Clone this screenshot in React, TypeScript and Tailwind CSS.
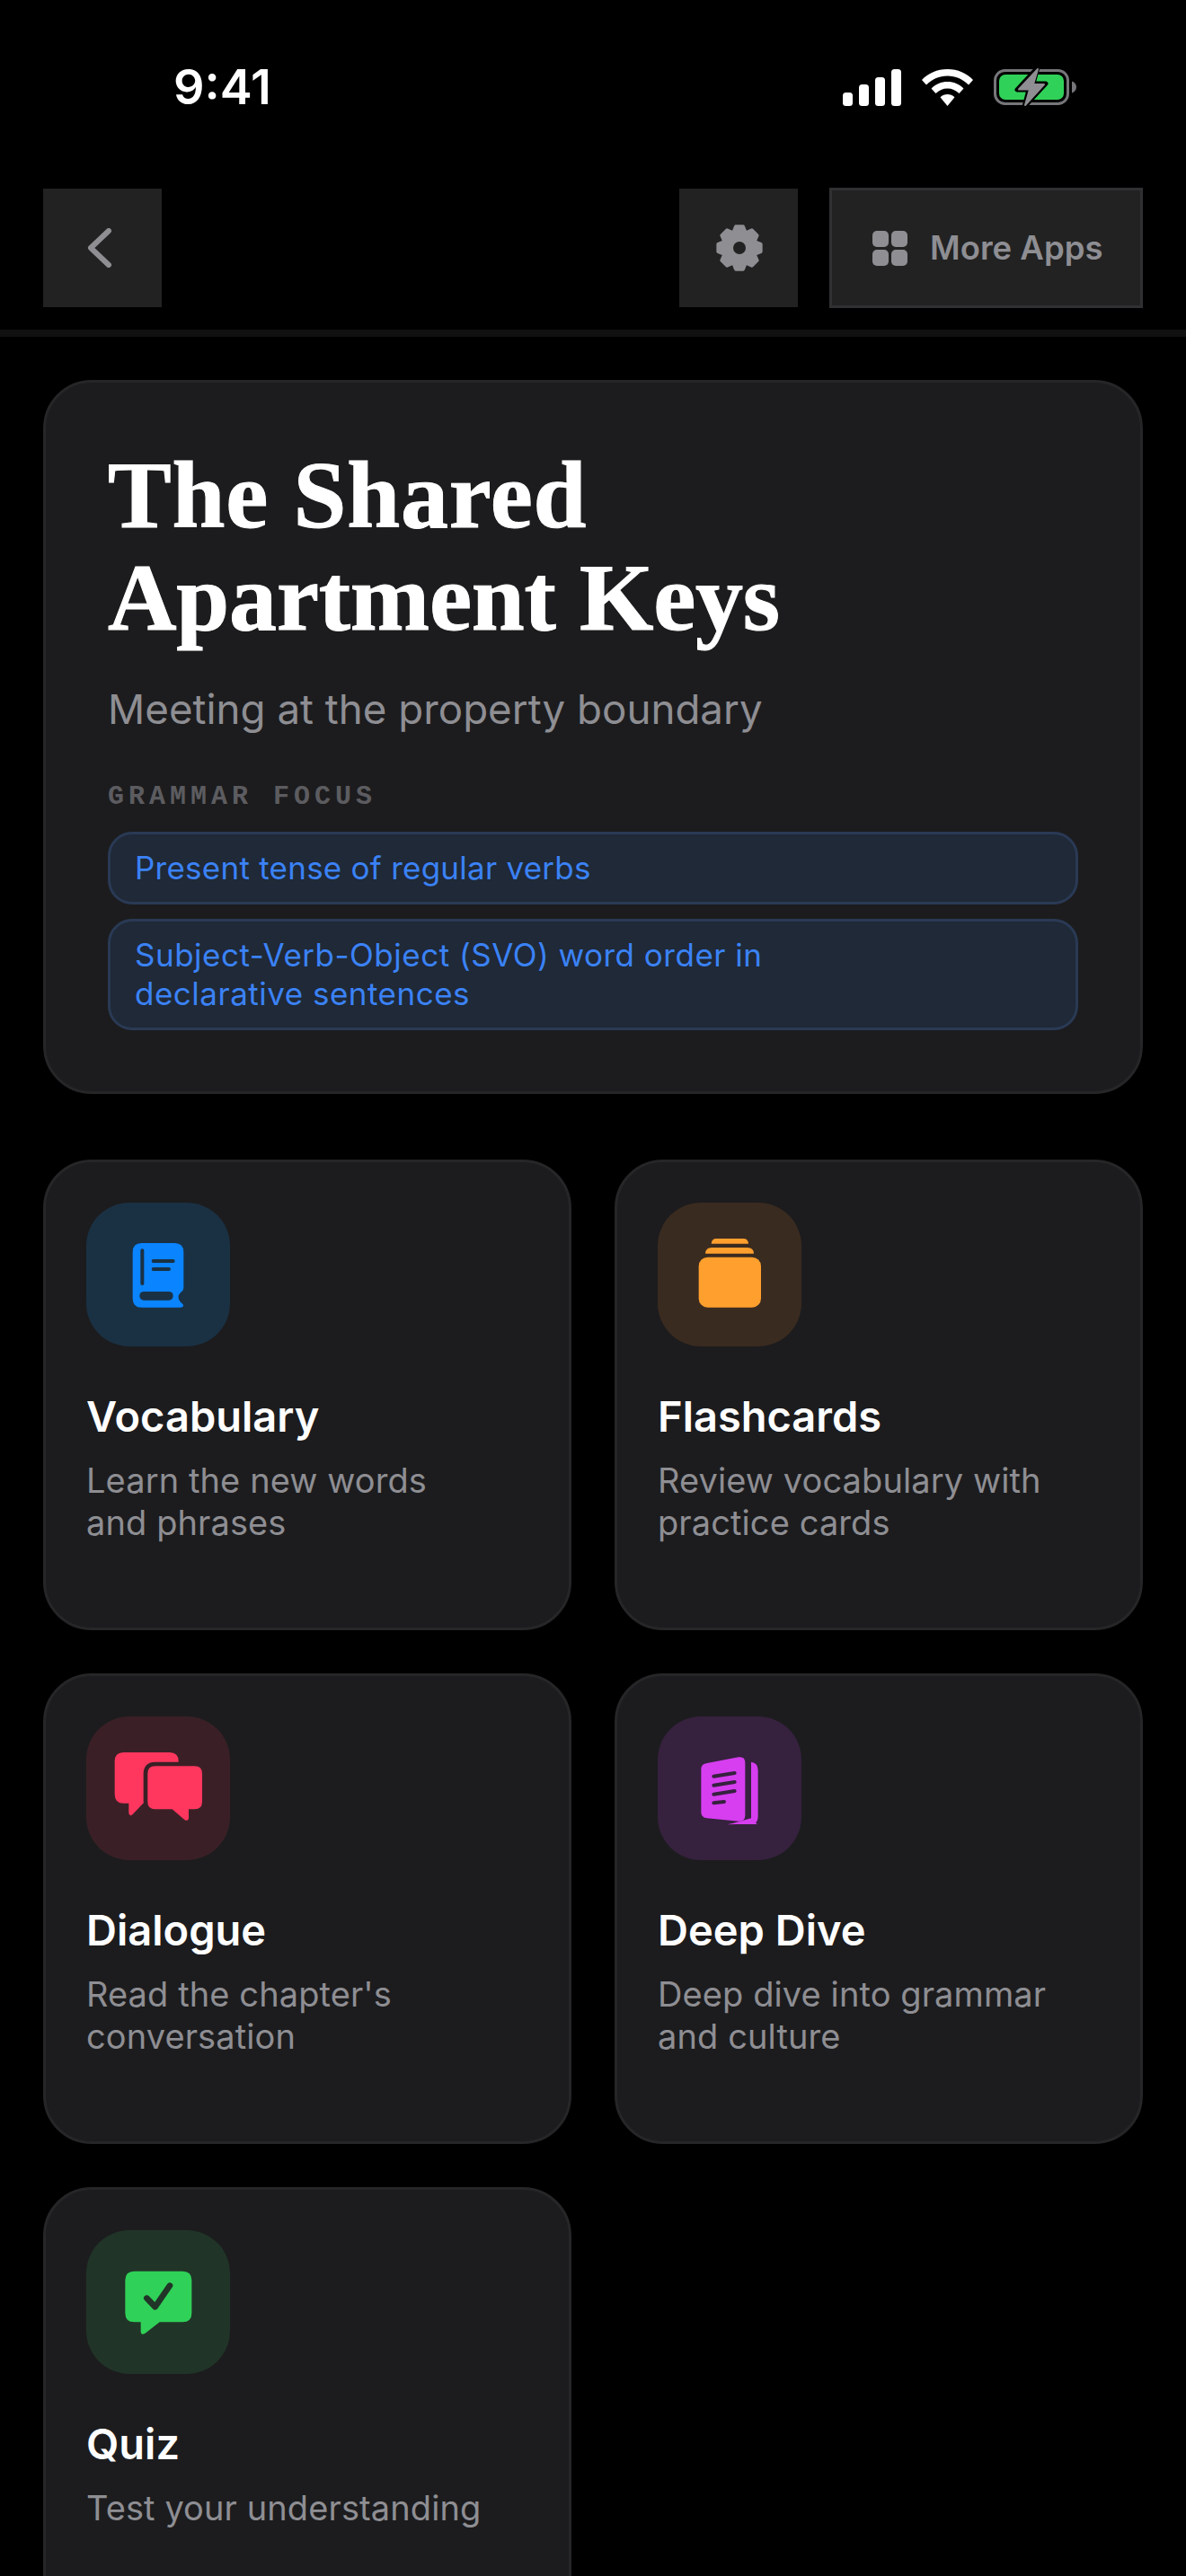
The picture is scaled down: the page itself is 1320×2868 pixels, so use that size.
import { Fragment } from "react";

const inter = "font-['Inter',sans-serif]";

// 8 tooth gear outline, centre 30,30
const gearPoints = Array.from({ length: 8 }, (_, i) => {
  const mid = (i * Math.PI) / 4 - Math.PI / 2;
  const pt = (r: number, a: number) => `${(30 + r * Math.cos(mid + a)).toFixed(2)},${(30 + r * Math.sin(mid + a)).toFixed(2)}`;
  return [pt(18.5, -0.36), pt(24, -0.17), pt(24, 0.17), pt(18.5, 0.36)].join(" ");
}).join(" ");

const GearIcon = () => (
  <svg width="60" height="60" viewBox="0 0 60 60" className="ml-[2px]">
    <polygon points={gearPoints} fill="#8e8e93" stroke="#8e8e93" strokeWidth="4" strokeLinejoin="round" />
    <circle cx="30" cy="30" r="7" fill="#222222" />
  </svg>
);

const SignalIcon = () => (
  <svg width="65" height="41" viewBox="0 0 65 41" fill="#fff">
    <rect x="0" y="26" width="11" height="15" rx="3.5" />
    <rect x="18" y="17" width="11" height="24" rx="3.5" />
    <rect x="36" y="9" width="11" height="32" rx="3.5" />
    <rect x="54" y="0" width="11" height="41" rx="3.5" />
  </svg>
);

const WifiIcon = () => (
  <svg width="57" height="41" viewBox="0 0 57 41" fill="#fff">
    <path d="M28.5 0C40 0 50 4.500 57 12L52 17.500C45.500 11 37.500 7.500 28.500 7.500C19.500 7.500 11.500 11 5 17.500L0 12C7 4.500 17 0 28.500 0Z" />
    <path d="M28.500 14C35.500 14 41.500 16.500 46.500 21.500L41.500 27C37.800 23.500 33.500 21.500 28.500 21.500C23.500 21.500 19.200 23.500 15.500 27L10.500 21.500C15.500 16.500 21.500 14 28.500 14Z" />
    <path d="M28.500 28C31.500 28 34.200 29 36.500 31.200L28.500 41L20.500 31.200C22.800 29 25.500 28 28.500 28Z" />
  </svg>
);

const BatteryIcon = () => (
  <svg width="92" height="44" viewBox="0 0 92 44">
    <rect x="1.500" y="3.500" width="81" height="37" rx="11" fill="none" stroke="#77777b" strokeWidth="3" />
    <rect x="6" y="8" width="72" height="28" rx="7" fill="#30d158" />
    <path d="M87 15.500C90 16.500 92 19 92 22C92 25 90 27.500 87 28.500Z" fill="#77777b" />
    <path d="M49 0L26 25H39L34 44L58 18H44Z" fill="#000" stroke="#000" strokeWidth="5" strokeLinejoin="round" />
    <path d="M49 2L28 24.500H40L35 42L56 19H44Z" fill="#8e8e93" stroke="#8e8e93" strokeWidth="2" strokeLinejoin="round" />
  </svg>
);

const BookIcon = () => (
  <svg viewBox="0 0 480 480" className="w-full h-full">
    <path
      d="M185 135H295Q325 135 325 165V285Q325 293 315 300Q300 315 315 332L323 340Q327 350 315 350H185Q155 350 155 320V165Q155 135 185 135Z"
      fill="#0a84ff"
    />
    <path d="M187 160V270M224 195H290M224 222H276" stroke="#1a3144" strokeWidth="12" strokeLinecap="round" fill="none" />
    <rect x="178" y="297" width="112" height="29" rx="14" fill="#1a3144" />
  </svg>
);

const CardsIcon = () => (
  <svg viewBox="0 0 480 480" className="w-full h-full" fill="#ff9f2e">
    <rect x="137" y="182" width="208" height="168" rx="30" />
    <path d="M159 170Q160 150 180 150H300Q320 150 321 170Z" />
    <path d="M179 137Q180 120 196 120H286Q302 120 303 137Z" />
  </svg>
);

const ChatIcon = () => (
  <svg viewBox="0 0 480 480" className="w-full h-full">
    <path
      d="M125 120H278Q308 120 308 150V260Q308 290 278 290H190L155 327Q143 336 142 322V290H125Q95 290 95 260V150Q95 120 125 120Z"
      fill="#ff375f"
    />
    <path
      d="M230 166H362Q387 166 387 191V285Q387 310 362 310H342V340Q340 352 328 345L287 310H230Q205 310 205 285V191Q205 166 230 166Z"
      fill="#ff375f"
      stroke="#3a2026"
      strokeWidth="28"
      paintOrder="stroke"
      strokeLinejoin="round"
    />
  </svg>
);

const PagesIcon = () => (
  <svg viewBox="0 0 480 480" className="w-full h-full">
    <path d="M240 360H310Q335 360 335 335V180Q335 155 312 152V340Z" fill="#d63ef0" />
    <path d="M230 361L320 348L332 360H260Z" fill="#d63ef0" />
    <path
      d="M165 156L270 136Q292 133 292 155V330Q292 352 270 350L165 340Q145 338 145 320V175Q145 159 165 156Z"
      fill="#d63ef0"
    />
    <path d="M187 200L257 189M187 230L257 219M187 260L257 249M187 289L222 285" stroke="#36213e" strokeWidth="12" strokeLinecap="round" fill="none" />
  </svg>
);

const QuizIcon = () => (
  <svg viewBox="0 0 480 480" className="w-full h-full">
    <path
      d="M160 137H322Q352 137 352 167V277Q352 307 322 307H245L196 345Q183 352 182 338V307H160Q130 307 130 277V167Q130 137 160 137Z"
      fill="#30d158"
    />
    <path d="M202 227L230 256L279 185" stroke="#213428" strokeWidth="20" strokeLinecap="round" strokeLinejoin="round" fill="none" />
  </svg>
);

const activities = [
  { title: "Vocabulary", lines: ["Learn the new words", "and phrases"], tile: "bg-[#1a3144]", Icon: BookIcon },
  { title: "Flashcards", lines: ["Review vocabulary with", "practice cards"], tile: "bg-[#3a2b20]", Icon: CardsIcon },
  { title: "Dialogue", lines: ["Read the chapter's", "conversation"], tile: "bg-[#3a2026]", Icon: ChatIcon },
  { title: "Deep Dive", lines: ["Deep dive into grammar", "and culture"], tile: "bg-[#36213e]", Icon: PagesIcon },
  { title: "Quiz", lines: ["Test your understanding"], tile: "bg-[#213428]", Icon: QuizIcon },
];

export default function App() {
  return (
    <div className={`${inter} h-[2868px] w-[1320px] overflow-hidden bg-black text-white`}>
      {/* Status bar */}
      <div className="flex h-[210px] items-start justify-between pl-[193px] pr-[122px] pt-[75px]">
        <span className="text-[54px] leading-[44px] font-semibold">9:41</span>
        <div className="flex items-center gap-[23px]">
          <SignalIcon />
          <WifiIcon />
          <BatteryIcon />
        </div>
      </div>

      {/* Nav */}
      <div className="flex h-[165px] items-start justify-between border-b-[8px] border-[#111112] px-[48px]">
        <button className="flex h-[132px] w-[132px] items-center justify-center bg-[#222222]">
          <svg width="30" height="44" viewBox="0 0 30 44" fill="none" stroke="#8e8e93" strokeWidth="6" strokeLinecap="round" strokeLinejoin="round" className="mr-[6px]">
            <path d="M25 3L5 22L25 41" />
          </svg>
        </button>
        <div className="flex items-start gap-[35px]">
          <button className="flex h-[132px] w-[132px] items-center justify-center bg-[#222222]">
            <GearIcon />
          </button>
          <button className="-mt-px flex h-[134px] w-[349px] items-center gap-[25px] border-[3px] border-[#303032] bg-[#222222] pl-[45px]">
            <span className="grid grid-cols-2 gap-[3px]">
              <span className="h-[18px] w-[18px] rounded-[5px] bg-[#8e8e93]" />
              <span className="h-[18px] w-[18px] rounded-[5px] bg-[#8e8e93]" />
              <span className="h-[18px] w-[18px] rounded-[5px] bg-[#8e8e93]" />
              <span className="h-[18px] w-[18px] rounded-[5px] bg-[#8e8e93]" />
            </span>
            <span className="text-[36.5px] font-semibold text-[#8e8e93]">More Apps</span>
          </button>
        </div>
      </div>

      <div className="px-[48px] pt-[48px]">
        {/* Chapter header */}
        <div className="h-[795px] rounded-[54px] border-[3px] border-[#262628] bg-[#1c1c1e] px-[69px] pt-[69px]">
          <h1 className="font-['Liberation_Serif',serif] text-[106px] leading-[114px] font-bold [-webkit-text-stroke:1px_white]">
            <span className="block tracking-[0.8px]">The Shared</span>
            <span className="block tracking-[-0.2px]">Apartment Keys</span>
          </h1>
          <p className="mt-[31px] text-[45.7px] leading-[72px] text-[#8e8e93]">Meeting at the property boundary</p>
          <p className="mt-[39px] font-['Liberation_Mono',monospace] text-[30px] leading-[45px] font-bold tracking-[5px] text-[#5c5c60]">
            GRAMMAR FOCUS
          </p>
          <div className="mt-[16px] flex flex-col gap-[16px]">
            <div className="rounded-[27px] border-[3px] border-[#2a3a55] bg-[#1f2937] px-[27px] py-[16px] text-[35px] leading-[43px] tracking-[0.25px] text-[#3b82f6]">
              Present tense of regular verbs
            </div>
            <div className="rounded-[27px] border-[3px] border-[#2a3a55] bg-[#1f2937] px-[27px] py-[16px] text-[35px] leading-[43px] tracking-[0.5px] text-[#3b82f6]">
              {["Subject-Verb-Object (SVO) word order in", "declarative sentences"].map((line, i) => (
                <Fragment key={line}>
                  {i > 0 && <br />}
                  {line}
                </Fragment>
              ))}
            </div>
          </div>
        </div>

        {/* Activities */}
        <div className="mt-[73px] grid grid-cols-2 gap-[48px]">
          {activities.map(({ title, lines, tile, Icon }) => (
            <div key={title} className="min-h-[524px] rounded-[54px] border-[3px] border-[#262628] bg-[#1c1c1e] px-[45px] pt-[45px]">
              <div className={`h-[160px] w-[160px] rounded-[48px] ${tile}`}>
                <Icon />
              </div>
              <h2 className="mt-[49px] text-[47px] leading-[58px] font-semibold">{title}</h2>
              <p className="mt-[19px] text-[38px] leading-[47px] tracking-[0.1px] text-[#8e8e93]">
                {lines.map((line) => (
                  <span key={line} className="block">
                    {line}
                  </span>
                ))}
              </p>
            </div>
          ))}
        </div>
      </div>
    </div>
  );
}
